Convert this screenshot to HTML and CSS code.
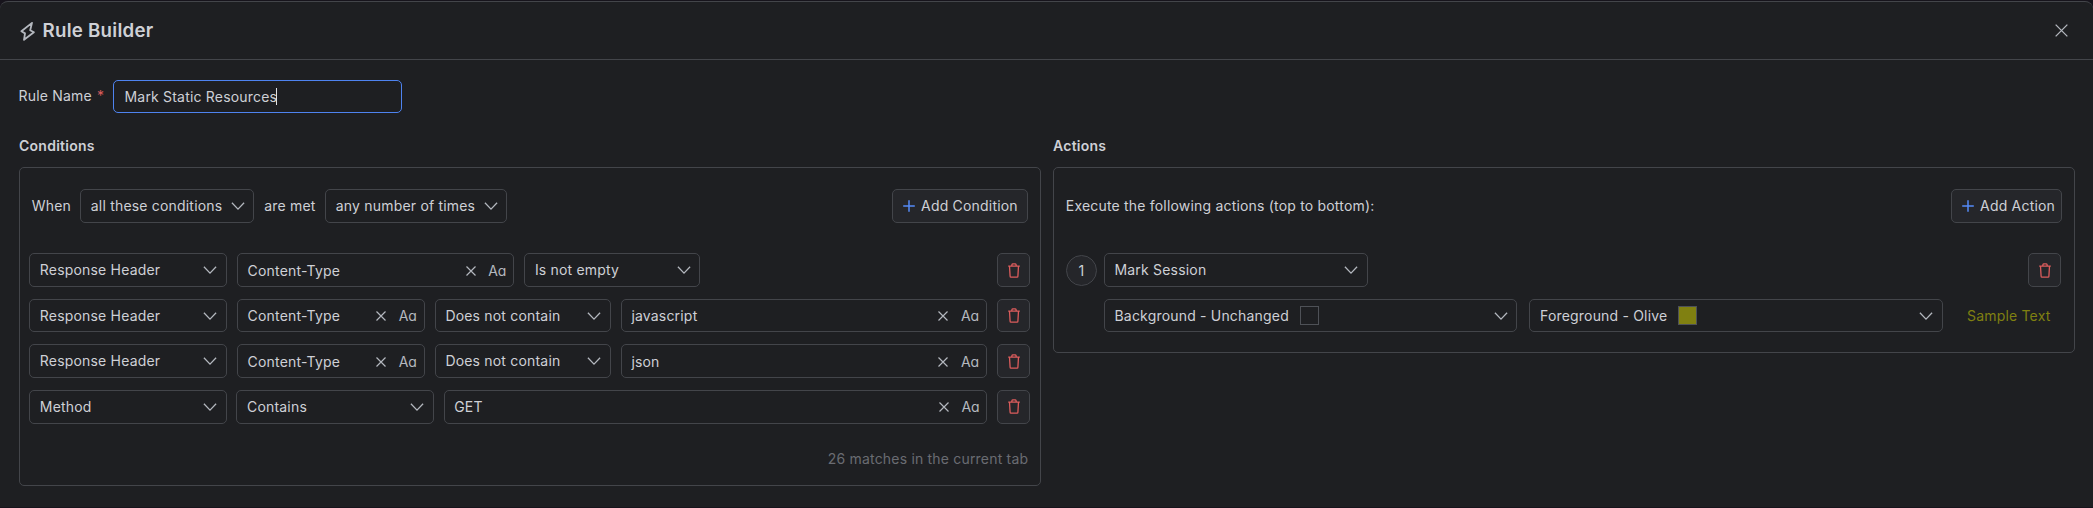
FILE: index.html
```html
<!DOCTYPE html>
<html lang="en">
<head>
<meta charset="utf-8">
<title>Rule Builder</title>
<link rel="stylesheet" href="styles.css">
</head>
<body>
<svg class="defs" aria-hidden="true">
  <symbol id="chevron" viewBox="0 0 14 14"><path d="M.9 3.8 7 10.100 13.100 3.8"/></symbol>
  <symbol id="cross" viewBox="0 0 10 10"><path d="M.5.5 9.500 9.500M9.500.5.5 9.500"/></symbol>
  <symbol id="plus" viewBox="0 0 12 12"><path d="M6 .2v11.6M.2 6h11.6"/></symbol>
  <symbol id="trash" viewBox="0 0 12 15"><path d="M.2 3.1h11.6M1.5 3.1l.6 10.2c0 .5.4.9.9.9h6c.5 0 .9-.4.9-.9l.6-10.2M3.7 3 4 1.5c.1-.4.4-.7.8-.7h2.4c.4 0 .7.3.8.7L8.300 3"/></symbol>
</svg>
<main class="dialog">
  <header class="titlebar">
    <svg class="bolt" viewBox="0 0 15 19"><path d="M12 .9 1.400 9.300 5 11.400 4 17.800 13.900 10.300 10.200 8.200Z"/></svg>
    <h1>Rule Builder</h1>
    <svg class="close"><use href="#cross"/></svg>
  </header>
  <div class="name-row">
    <label>Rule Name <span class="required">*</span></label>
    <div class="field name-field"><span>Mark Static Resources</span><i class="caret"></i></div>
  </div>
  <div class="columns">
    <section>
      <h2>Conditions</h2>
      <div class="panel conditions">
        <div class="panel-head">
          <span class="when">When</span>
          <div class="field select w-all"><span>all these conditions</span><svg class="chev"><use href="#chevron"/></svg></div>
          <span class="met">are met</span>
          <div class="field select w-times"><span>any number of times</span><svg class="chev"><use href="#chevron"/></svg></div>
          <div class="field button w-addc"><svg class="plus"><use href="#plus"/></svg><span>Add Condition</span></div>
        </div>
        <div class="rows">
          <div class="row">
            <div class="field select w-type"><span>Response Header</span><svg class="chev"><use href="#chevron"/></svg></div>
            <div class="field input w-header-wide"><span>Content-Type</span><svg class="clear"><use href="#cross"/></svg><b class="case">Aa</b></div>
            <div class="field select w-op"><span>Is not empty</span><svg class="chev"><use href="#chevron"/></svg></div>
            <div class="field button delete"><svg class="trash"><use href="#trash"/></svg></div>
          </div>
          <div class="row">
            <div class="field select w-type"><span>Response Header</span><svg class="chev"><use href="#chevron"/></svg></div>
            <div class="field input w-header"><span>Content-Type</span><svg class="clear"><use href="#cross"/></svg><b class="case">Aa</b></div>
            <div class="field select w-op"><span>Does not contain</span><svg class="chev"><use href="#chevron"/></svg></div>
            <div class="field input grow"><span>javascript</span><svg class="clear"><use href="#cross"/></svg><b class="case">Aa</b></div>
            <div class="field button delete"><svg class="trash"><use href="#trash"/></svg></div>
          </div>
          <div class="row">
            <div class="field select w-type"><span>Response Header</span><svg class="chev"><use href="#chevron"/></svg></div>
            <div class="field input w-header"><span>Content-Type</span><svg class="clear"><use href="#cross"/></svg><b class="case">Aa</b></div>
            <div class="field select w-op"><span>Does not contain</span><svg class="chev"><use href="#chevron"/></svg></div>
            <div class="field input grow"><span>json</span><svg class="clear"><use href="#cross"/></svg><b class="case">Aa</b></div>
            <div class="field button delete"><svg class="trash"><use href="#trash"/></svg></div>
          </div>
          <div class="row tight">
            <div class="field select w-type"><span>Method</span><svg class="chev"><use href="#chevron"/></svg></div>
            <div class="field select w-type"><span>Contains</span><svg class="chev"><use href="#chevron"/></svg></div>
            <div class="field input grow"><span>GET</span><svg class="clear"><use href="#cross"/></svg><b class="case">Aa</b></div>
            <div class="field button delete"><svg class="trash"><use href="#trash"/></svg></div>
          </div>
        </div>
        <p class="matches">26 matches in the current tab</p>
      </div>
    </section>
    <section>
      <h2>Actions</h2>
      <div class="panel actions">
        <div class="panel-head">
          <span class="intro">Execute the following actions (top to bottom):</span>
          <div class="field button w-adda"><svg class="plus"><use href="#plus"/></svg><span>Add Action</span></div>
        </div>
        <div class="rows">
          <div class="row">
            <span class="step">1</span>
            <div class="field select w-action"><span>Mark Session</span><svg class="chev"><use href="#chevron"/></svg></div>
            <div class="field button delete"><svg class="trash"><use href="#trash"/></svg></div>
          </div>
          <div class="row colors">
            <div class="field select w-color"><span>Background - Unchanged</span><i class="swatch"></i><svg class="chev"><use href="#chevron"/></svg></div>
            <div class="field select w-color"><span>Foreground - Olive</span><i class="swatch olive"></i><svg class="chev"><use href="#chevron"/></svg></div>
            <span class="sample">Sample Text</span>
          </div>
        </div>
      </div>
    </section>
  </div>
</main>
</body>
</html>
```
FILE: styles.css
```css
* { box-sizing: border-box; }

body {
  margin: 0;
  height: 508px;
  padding: 1px 0;
  overflow: hidden;
  background: #17141c;
  color: #ced0d6;
  font: 14px/20px Inter, "Liberation Sans", sans-serif;
  letter-spacing: 0.19px;
}

h1, h2, p { margin: 0; }
svg { fill: none; stroke: #b4b8bf; stroke-width: 1.3; flex: none; }
.defs { position: absolute; width: 0; height: 0; }

.dialog {
  height: 506px;
  background: #1e1f22;
  border-top: 1px solid #43454a;
  border-radius: 8px 8px 0 0;
}

.titlebar {
  display: flex;
  align-items: center;
  height: 58px;
  padding: 0 25px 0 20px;
  border-bottom: 1px solid #43454a;
}
.bolt { width: 15px; height: 19px; margin: 1px 7.500px 0 0; stroke-width: 1.800; stroke-linejoin: round; }
h1 { padding-top: 1px; font-size: 18.700px; font-weight: 600; letter-spacing: 0.25px; }
.close { width: 13px; height: 13px; margin-left: auto; stroke-width: 1; }

.name-row { display: flex; padding: 20px 0 0 18.500px; }
.name-row label { width: 94.500px; line-height: 32px; }
.required { margin-left: 1px; color: #db5c5c; }

.field {
  display: flex;
  align-items: center;
  flex: none;
  height: 33.6px;
  border: 1px solid #43454a;
  border-radius: 5px;
  padding: 0 8.500px 0 9.500px;
  white-space: nowrap;
}
.name-field { width: 289px; height: 33px; border-color: #4e83f0; padding: 1px 10.500px; }
.caret { width: 1px; height: 17px; margin-left: -1px; background: #dfe1e5; }

.columns { display: grid; grid-template-columns: 1022px 1022px; gap: 12px; padding: 23px 0 0 19px; }
h2 { font-size: 14px; line-height: 20px; font-weight: 600; letter-spacing: 0.25px; }
.panel { margin-top: 11px; border: 1px solid #43454a; border-radius: 5px; padding: 21px 9.900px 0 9.300px; }
.conditions { height: 319px; }
.actions { height: 186px; }

.panel-head { display: flex; align-items: center; height: 33.6px; padding: 0 2px 0 2.500px; }
.when { width: 48.500px; }
.met { width: 61px; margin-left: 10px; }
.panel-head .button { margin-left: auto; padding-left: 10px; }
.w-all { width: 174px; }
.w-times { width: 182px; }
.w-addc { width: 136px; }
.w-adda { width: 111px; }

.rows { display: flex; flex-direction: column; gap: 12px; margin-top: 30.700px; }
.row { display: flex; gap: 10.300px; }
.row.tight { gap: 9.700px; }
.select .chev { width: 14px; height: 14px; margin-left: auto; }
.input { padding: 1px 7px 0 9.500px; }
.input .clear { width: 10px; height: 10px; margin-left: auto; stroke-width: 1.200; }
.case { margin-left: 12.500px; font-weight: 400; font-feature-settings: "cv11"; color: #b4b8bf; letter-spacing: -.2px; }
.w-type { width: 197.500px; }
.w-header { width: 187.500px; }
.w-header-wide { width: 277px; }
.w-op { width: 175.700px; }
.grow { flex: 1; }

.button { background: #25262a; }
.plus { width: 12px; height: 12px; margin-right: 6px; stroke: #548af7; stroke-width: 1.500; }
.delete { width: 33px; margin-left: auto; padding: 0; justify-content: center; }
.row .grow + .delete { margin-left: 0; }
.trash { width: 12px; height: 15px; stroke: #db5c5c; }

.matches { margin-top: 25px; padding-right: 1.900px; text-align: right; color: #6a6c72; }

.actions .row { padding-left: 2.700px; }
.actions .row:first-child { gap: 7px; padding-right: 2.700px; }
.step {
  width: 31px; height: 31px; margin-top: 1.500px;
  border: 1px solid #43454a; border-radius: 50%;
  background: #25262a; line-height: 29px; text-align: center;
}
.w-action { width: 264px; }
.actions .row.colors { gap: 12px; padding-left: 40.700px; align-items: center; }
.w-color { width: 413.500px; }
.swatch { width: 19px; height: 19px; margin-left: 10.600px; border: 1px solid #4e5157; }
.olive { background: #808011; }
.sample { margin-left: 12px; color: #808011; }
```
